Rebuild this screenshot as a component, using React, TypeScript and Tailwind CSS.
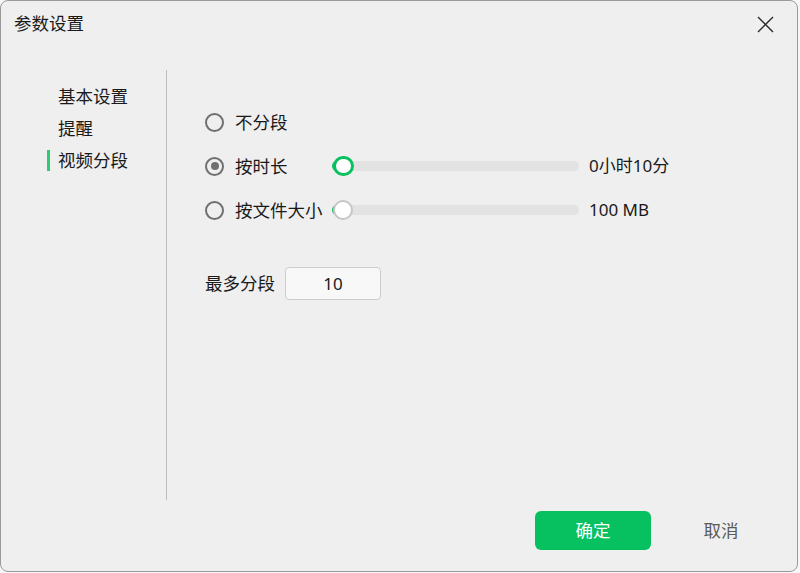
import React from 'react';

const font = { fontFamily: '"Segoe UI", "Noto Sans", "Noto Sans CJK SC", sans-serif' };

const Radio = ({ checked }: { checked?: boolean }) => (
  <span className="w-[19px] h-[19px] rounded-full border-[2.5px] border-[#707070] flex items-center justify-center shrink-0">
    {checked && <span className="w-[8px] h-[8px] rounded-full bg-[#707070]" />}
  </span>
);

const Slider = ({ active }: { active?: boolean }) => (
  <div className="relative w-[247px] h-[20px] flex items-center">
    <div className="w-full h-[10px] rounded-full bg-[#e2e2e2]" />
    <div className="absolute left-0 top-[5px] w-[12px] h-[10px] rounded-l-full bg-[#07c160]" />
    <div
      className={
        active
          ? 'absolute left-[1px] top-0 w-[21px] h-[20px] rounded-full bg-white border-[3px] border-[#07c160]'
          : 'absolute left-[1px] top-0 w-[20px] h-[20px] rounded-full bg-white border-2 border-[#c6c6c6]'
      }
    />
  </div>
);

const Row = ({
  label,
  checked,
  slider,
  value,
  active,
}: {
  label: string;
  checked?: boolean;
  slider?: boolean;
  value?: string;
  active?: boolean;
}) => (
  <div className="flex items-center h-[32px]">
    <Radio checked={checked} />
    <span className="ml-[11px] w-[97px] text-[17.5px] text-[#1a1a1a]">{label}</span>
    {slider && (
      <>
        <Slider active={active} />
        <span className="ml-[10px] text-[17px] text-[#1a1a1a]">{value}</span>
      </>
    )}
  </div>
);

export default function App() {
  return (
    <div className="w-[800px] h-[573px] bg-[#f7f7f7]" style={font}>
      <div className="w-[798px] h-[572px] bg-[#efefef] border border-[#9a9a9a] rounded-lg flex flex-col overflow-hidden">
        <div className="h-[45px] flex items-center justify-between pl-[13px] pr-[23px]">
          <span className="text-[17.5px] text-[#1a1a1a]">参数设置</span>
          <svg width="17" height="17" viewBox="0 0 17 17" className="mt-[1px]">
            <path d="M1 1 L16 16 M16 1 L1 16" stroke="#2a2a2a" strokeWidth="1.4" fill="none" />
          </svg>
        </div>

        <div className="flex h-[430px] mt-[24px]">
          <div className="w-[166px] border-r border-[#bdbdbd] pt-[10px] flex flex-col">
            <div className="h-[32px] flex items-center pl-[57px] text-[17.5px] text-[#1a1a1a]">基本设置</div>
            <div className="h-[32px] flex items-center pl-[57px] text-[17.5px] text-[#1a1a1a]">提醒</div>
            <div className="h-[32px] flex items-center pl-[46px] text-[17.5px] text-[#1a1a1a]">
              <span className="w-[3px] h-[21px] bg-[#2fca74] mr-[8px]" />
              视频分段
            </div>
          </div>

          <div className="flex-1 pl-[38px] pt-[36px] flex flex-col">
            <div className="flex flex-col gap-[12px]">
              <Row label="不分段" />
              <Row label="按时长" checked slider value="0小时10分" active />
              <Row label="按文件大小" slider value="100 MB" />
            </div>
            <div className="flex items-center mt-[41px]">
              <span className="text-[17.5px] text-[#1a1a1a]">最多分段</span>
              <div className="ml-[10px] w-[96px] h-[33px] rounded-[4px] border border-[#cdcdcd] bg-[#f8f8f8] flex items-center justify-center text-[17px] text-[#1a1a1a]">
                10
              </div>
            </div>
          </div>
        </div>

        <div className="flex justify-end items-start pt-[11px] pr-[18px] gap-[12px]">
          <button className="w-[116px] h-[39px] rounded-[6px] bg-[#07c160] text-white text-[17.5px]">确定</button>
          <button className="w-[116px] h-[39px] text-[17.5px] text-[#5a5a5a]">取消</button>
        </div>
      </div>
    </div>
  );
}
